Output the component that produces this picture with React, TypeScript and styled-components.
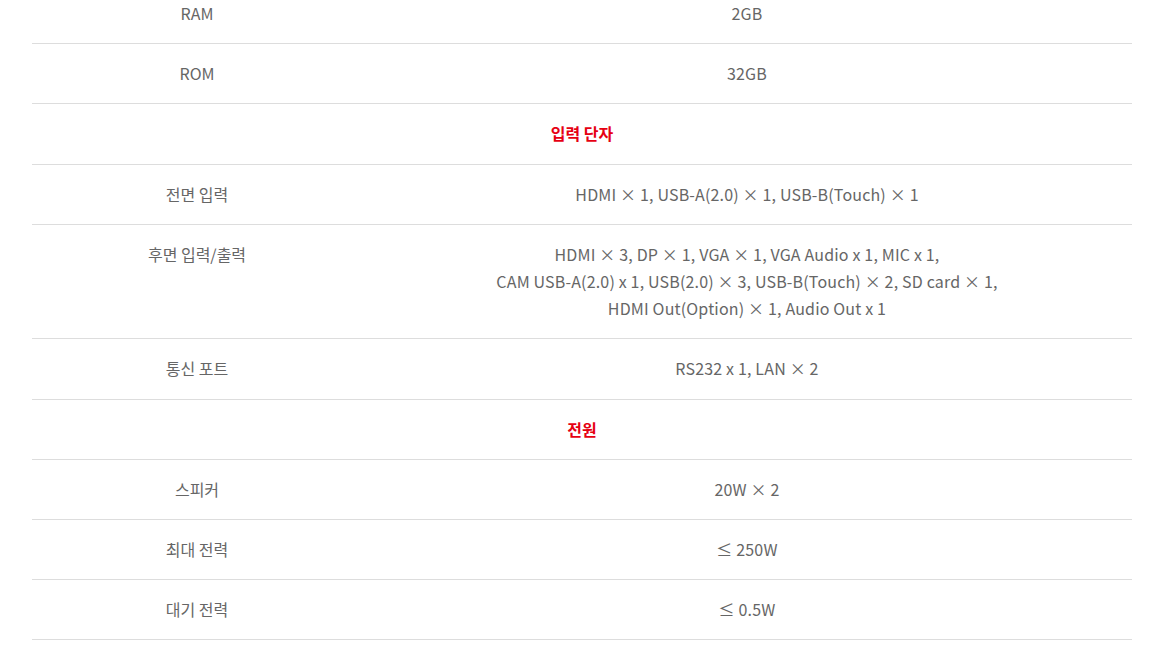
import React from "react";
import styled, { createGlobalStyle } from "styled-components";

const GlobalStyle = createGlobalStyle`
  html, body {
    margin: 0;
    padding: 0;
    background: #fff;
    overflow: hidden;
  }
  body {
    font-family: "Noto Sans CJK KR", "Noto Sans", sans-serif;
  }
`;

const Page = styled.div`
  width: 1165px;
  height: 645px;
  overflow: hidden;
  padding: 0 33px 0 32px;
  box-sizing: border-box;
`;

const SpecTable = styled.div`
  margin-top: -16px;
  width: 1100px;
  display: flex;
  flex-direction: column;
`;

const Row = styled.div`
  display: grid;
  grid-template-columns: 330px 770px;
  border-bottom: 1px solid #dddddd;
  padding: 16px 0;
  font-size: 16px;
  line-height: 1.7;
  color: #666666;
  text-align: center;
`;

const Label = styled.div`
  align-self: start;
`;

const Value = styled.div`
  letter-spacing: 0.17px;
`;

const SectionRow = styled.div`
  border-bottom: 1px solid #dddddd;
  padding: 16px 0;
  font-size: 16px;
  line-height: 1.7;
  font-weight: 700;
  color: #e60012;
  text-align: center;
`;

type Spec =
  | { kind: "row"; label: string; value: string[] }
  | { kind: "section"; title: string };

const specs: Spec[] = [
  { kind: "row", label: "RAM", value: ["2GB"] },
  { kind: "row", label: "ROM", value: ["32GB"] },
  { kind: "section", title: "입력 단자" },
  { kind: "row", label: "전면 입력", value: ["HDMI × 1, USB-A(2.0) × 1, USB-B(Touch) × 1"] },
  {
    kind: "row",
    label: "후면 입력/출력",
    value: [
      "HDMI × 3, DP × 1, VGA × 1, VGA Audio x 1, MIC x 1,",
      "CAM USB-A(2.0) x 1, USB(2.0) × 3, USB-B(Touch) × 2, SD card × 1,",
      "HDMI Out(Option) × 1, Audio Out x 1",
    ],
  },
  { kind: "row", label: "통신 포트", value: ["RS232 x 1, LAN × 2"] },
  { kind: "section", title: "전원" },
  { kind: "row", label: "스피커", value: ["20W × 2"] },
  { kind: "row", label: "최대 전력", value: ["≤ 250W"] },
  { kind: "row", label: "대기 전력", value: ["≤ 0.5W"] },
];

export default function App() {
  return (
    <>
      <GlobalStyle />
      <Page>
        <SpecTable>
          {specs.map((s, i) =>
            s.kind === "section" ? (
              <SectionRow key={i}>{s.title}</SectionRow>
            ) : (
              <Row key={i}>
                <Label>{s.label}</Label>
                <Value>
                  {s.value.map((line, j) => (
                    <div key={j}>{line}</div>
                  ))}
                </Value>
              </Row>
            )
          )}
        </SpecTable>
      </Page>
    </>
  );
}
